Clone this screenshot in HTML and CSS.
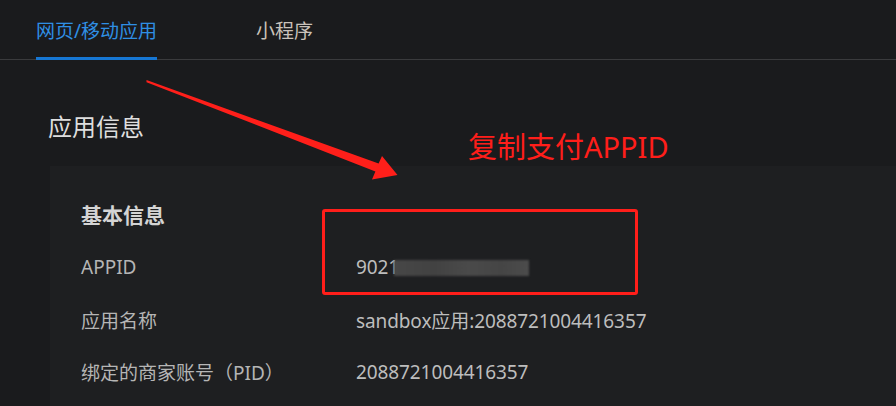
FILE: index.html
```html
<!DOCTYPE html>
<html lang="zh-CN">
<head>
<meta charset="utf-8">
<title>应用信息</title>
<link rel="stylesheet" href="styles.css">
</head>
<body>
<div class="page">
  <nav class="tabs">
    <div class="tab tab-active">网页/移动应用</div>
    <div class="tab">小程序</div>
  </nav>
  <h1 class="title">应用信息</h1>
  <section class="card">
    <h2 class="card-title">基本信息</h2>
    <div class="info-grid">
      <div class="label">APPID</div>
      <div class="value">9021<span class="masked"></span></div>
      <div class="label">应用名称</div>
      <div class="value">sandbox应用:2088721004416357</div>
      <div class="label">绑定的商家账号（PID）</div>
      <div class="value">2088721004416357</div>
    </div>
  </section>

  <svg class="arrow" width="896" height="406" viewBox="0 0 896 406" aria-hidden="true">
    <polygon points="146.5,80 378.6,163.6 382,156 397.5,175 372,179.5 375.4,171.4 146.5,82.2" fill="#ff1f1a"/>
  </svg>
  <div class="note">复制支付APPID</div>
  <div class="highlight"></div>
</div>
</body>
</html>
```

FILE: styles.css
```css
html, body {
  margin: 0;
  padding: 0;
  background: #1a1b1d;
}

body {
  font-family: "Noto Sans", "Noto Sans CJK SC", sans-serif;
  color: #c4c4c4;
  width: 896px;
  height: 406px;
  overflow: hidden;
}

.page {
  position: relative;
  width: 896px;
  height: 406px;
}

.tabs {
  display: flex;
  align-items: flex-end;
  gap: 99px;
  height: 59px;
  padding-left: 36px;
  border-bottom: 1px solid #3a3b3d;
  box-sizing: content-box;
}

.tab {
  font-size: 19px;
  line-height: 26px;
  padding: 18px 0 13px;
  border-bottom: 3px solid transparent;
  margin-bottom: -1px;
  color: #c9c2ba;
  white-space: nowrap;
}

.tab-active {
  color: #2f8fe4;
  border-bottom-color: #1677d4;
}

.title {
  margin: 0;
  padding: 52px 0 0 48px;
  font-size: 24px;
  line-height: 30px;
  font-weight: 400;
  color: #dedede;
  height: 76px;
  box-sizing: border-box;
}

.card {
  margin: 30px 0 0 50px;
  background: #1e1f21;
  padding: 34px 0 0 31px;
  height: 240px;
  box-sizing: border-box;
}

.card-title {
  margin: 0;
  font-size: 21px;
  line-height: 30px;
  font-weight: 600;
  color: #d4d4d4;
}

.info-grid {
  display: grid;
  grid-template-columns: 275px 1fr;
  grid-auto-rows: 52.5px;
  align-items: center;
  margin-top: 11px;
  font-size: 19px;
}

.label {
  color: #b5b5b5;
  white-space: nowrap;
}

.value {
  color: #bdbdbd;
  white-space: nowrap;
  letter-spacing: -0.1px;
}

.masked {
  display: inline-block;
  vertical-align: middle;
  width: 135px;
  height: 16px;
  margin-left: -5px;
  margin-top: -3px;
  background: linear-gradient(90deg, #474747 0%, #424242 30%, #4a4a4a 55%, #454545 80%, #4c4c4c 100%);
  filter: blur(0.8px);
}

.arrow {
  position: absolute;
  left: 0;
  top: 0;
  pointer-events: none;
}

.note {
  position: absolute;
  left: 468px;
  top: 129px;
  font-size: 29px;
  line-height: 36px;
  color: #ff1e1a;
  white-space: nowrap;
}

.highlight {
  position: absolute;
  left: 322px;
  top: 209px;
  width: 310px;
  height: 80px;
  border: 3px solid #ff1e1a;
  border-radius: 3px;
}
```
